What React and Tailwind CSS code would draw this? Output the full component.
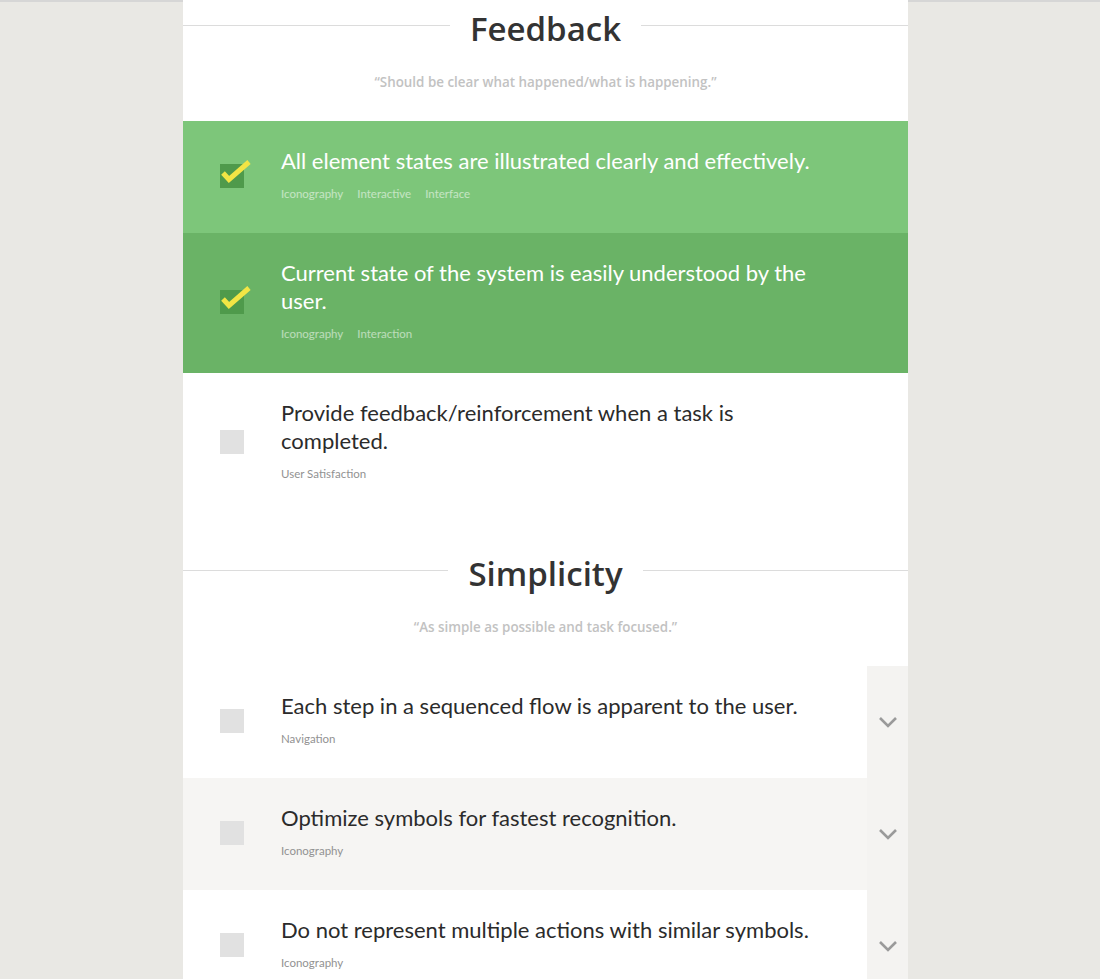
import React, { useState } from "react";

const sections = [
  {
    title: "Feedback",
    quote: "“Should be clear what happened/what is happening.”",
    items: [
      {
        text: "All element states are illustrated clearly and effectively.",
        tags: ["Iconography", "Interactive", "Interface"],
        checked: true,
      },
      {
        text: "Current state of the system is easily understood by the user.",
        tags: ["Iconography", "Interaction"],
        checked: true,
      },
      {
        text: "Provide feedback/reinforcement when a task is completed.",
        tags: ["User Satisfaction"],
        checked: false,
      },
    ],
  },
  {
    title: "Simplicity",
    quote: "“As simple as possible and task focused.”",
    expandable: true,
    items: [
      {
        text: "Each step in a sequenced flow is apparent to the user.",
        tags: ["Navigation"],
        checked: false,
      },
      {
        text: "Optimize symbols for fastest recognition.",
        tags: ["Iconography"],
        checked: false,
      },
      {
        text: "Do not represent multiple actions with similar symbols.",
        tags: ["Iconography"],
        checked: false,
      },
    ],
  },
];

const CheckBox = ({ checked }) =>
  checked ? (
    <div className="relative w-6 h-6 mt-[3px] bg-[#4f9a4b]">
      <svg
        className="absolute -top-[7px] left-0"
        width="32"
        height="32"
        viewBox="0 0 32 32"
      >
        <path
          d="M3 16 L9 22.5 L29 5"
          fill="none"
          stroke="#f2e545"
          strokeWidth="5"
          strokeLinejoin="miter"
        />
      </svg>
    </div>
  ) : (
    <div className="w-6 h-6 mt-[3px] bg-[#e1e1e1]" />
  );

const Chevron = () => (
  <svg width="20" height="12" viewBox="0 0 20 12">
    <path d="M2 2 L10 10 L18 2" fill="none" stroke="#9a9a9a" strokeWidth="2.6" />
  </svg>
);

const Row = ({ item, index, expandable, onToggle }) => {
  let bg = "bg-white";
  if (item.checked) bg = index % 2 === 0 ? "bg-[#7dc67a]" : "bg-[#6ab366]";
  else if (index % 2 === 1) bg = "bg-[#f6f5f3]";

  return (
    <div className={`flex ${bg}`}>
      <div
        className="flex flex-1 items-center pl-[37px] pt-[26px] pb-[31px] cursor-pointer"
        onClick={onToggle}
      >
        <CheckBox checked={item.checked} />
        <div className="ml-[37px] w-[536px]">
          <p
            className={`text-[22px] leading-[28px] ${
              item.checked ? "text-white" : "text-[#2b2b2b]"
            }`}
          >
            {item.text}
          </p>
          <div
            className={`flex gap-[14px] mt-[11px] text-[11.5px] leading-[16px] ${
              item.checked ? "text-white/55" : "text-[#929292]"
            }`}
          >
            {item.tags.map((tag) => (
              <span key={tag}>{tag}</span>
            ))}
          </div>
        </div>
      </div>
      {expandable && (
        <div className="w-[41px] bg-[#f4f3f1] flex items-center justify-center">
          <Chevron />
        </div>
      )}
    </div>
  );
};

const App = () => {
  const [data, setData] = useState(sections);

  const toggle = (s, i) => {
    setData((prev) =>
      prev.map((sec, si) =>
        si !== s
          ? sec
          : {
              ...sec,
              items: sec.items.map((it, ii) =>
                ii === i ? { ...it, checked: !it.checked } : it
              ),
            }
      )
    );
  };

  return (
    <div
      className="min-h-screen bg-[#e9e8e4] border-t-2 border-[#d6d6d6]"
      style={{ fontFamily: "Lato, 'Noto Sans', sans-serif" }}
    >
      <div className="w-[725px] ml-[183px] bg-white min-h-[977px]">
        {data.map((sec, s) => (
          <section key={sec.title} className={s === 0 ? "" : "pt-[34px]"}>
            <div className="flex items-center h-[50px] -mt-[2px]">
              <div className="flex-1 h-px bg-[#dcdcdc]" />
              <h2
                className="px-5 mt-[8px] text-[33px] leading-[40px] font-semibold text-[#333]"
                style={{ fontFamily: "'Open Sans', sans-serif" }}
              >
                {sec.title}
              </h2>
              <div className="flex-1 h-px bg-[#dcdcdc]" />
            </div>
            <p
              className="mt-[22px] mb-[29px] text-center text-[13.4px] leading-[20px] font-semibold text-[#c2c2c2]"
              style={{ fontFamily: "'Open Sans', sans-serif" }}
            >
              {sec.quote}
            </p>
            <div>
              {sec.items.map((item, i) => (
                <Row
                  key={item.text}
                  item={item}
                  index={i}
                  expandable={sec.expandable}
                  onToggle={() => toggle(s, i)}
                />
              ))}
            </div>
          </section>
        ))}
      </div>
    </div>
  );
};

export default App;
